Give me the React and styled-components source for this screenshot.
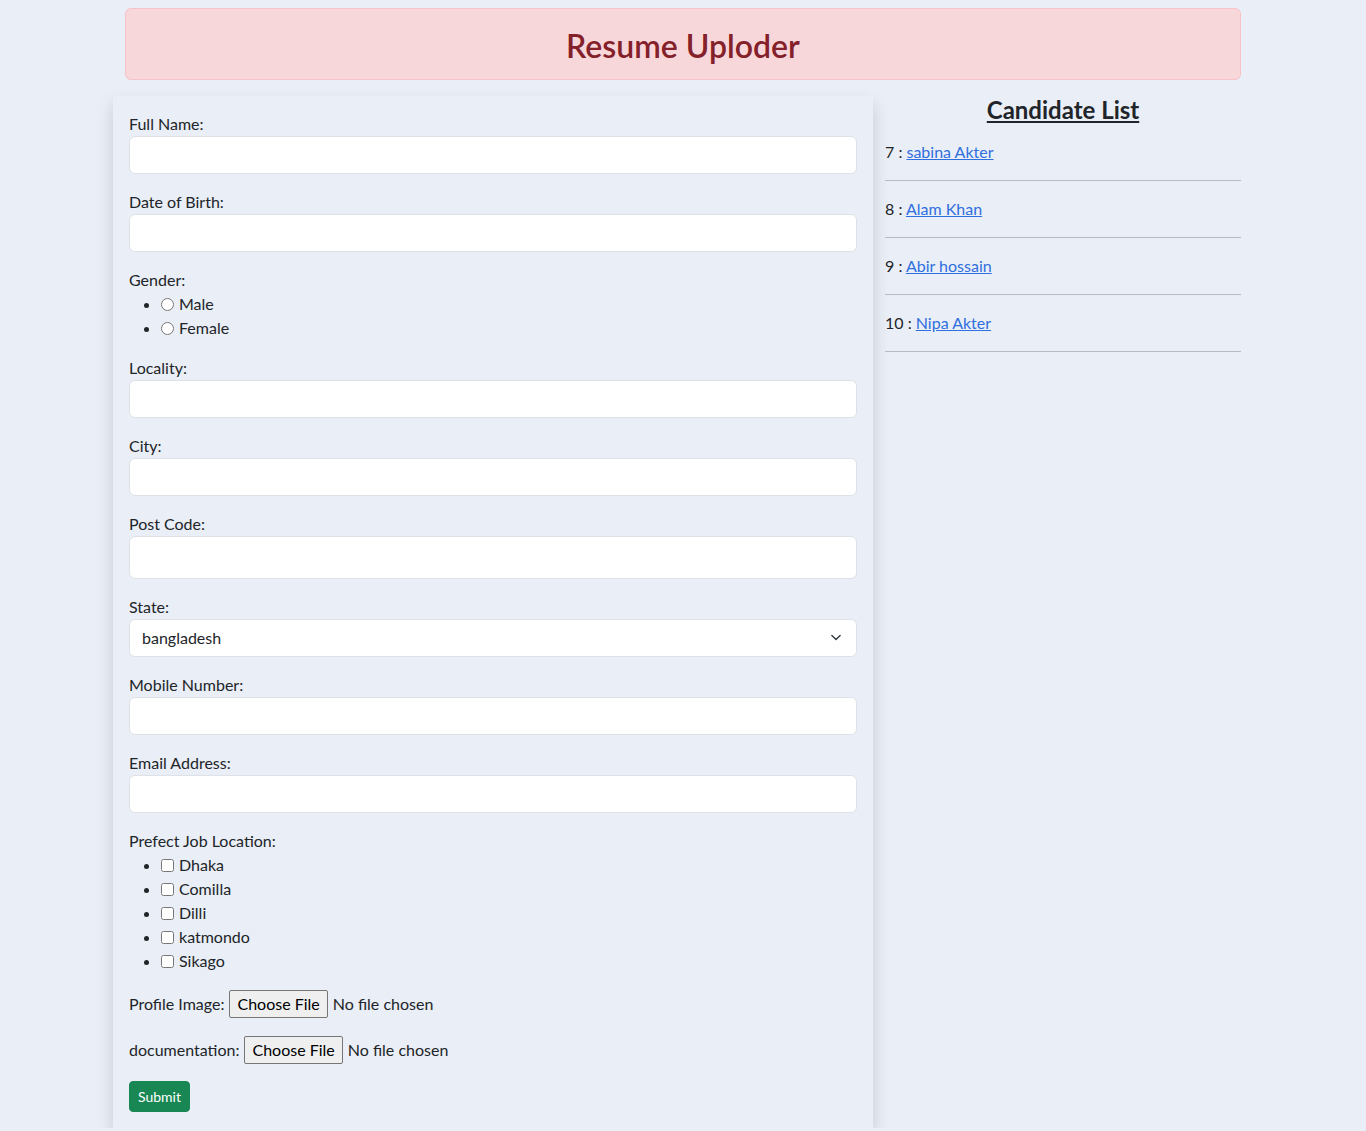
import React from 'react';
import styled, { createGlobalStyle } from 'styled-components';

const FONT = `"Segoe UI", Lato, "Liberation Sans", sans-serif`;

const GlobalStyle = createGlobalStyle`
  * { box-sizing: border-box; }
  body {
    margin: 0;
    background-color: #eaeef6;
    color: #212529;
    font-family: ${FONT};
    font-size: 16px;
    line-height: 1.5;
  }
`;

const Container = styled.div`
  max-width: 1140px;
  margin: 0 auto;
  padding: 0 12px;
`;

const Alert = styled.div`
  margin-top: 8px;
  margin-bottom: 16px;
  padding: 18px 16px 14px;
  background-color: #f8d7da;
  border: 1px solid #f5c2c7;
  border-radius: 6px;
  color: #842029;
  text-align: center;
`;

const Title = styled.h2`
  margin: 0;
  font-size: 32px;
  font-weight: 600;
  line-height: 1.2;
`;

const Row = styled.div`
  display: flex;
  margin: 0 -12px;
  align-items: flex-start;
`;

const FormCol = styled.form`
  width: 760px;
  flex: 0 0 auto;
  padding: 16px;
  box-shadow: 0 8px 16px rgba(0, 0, 0, 0.15);
`;

const ListCol = styled.div`
  flex: 1;
  padding: 0 12px;
`;

const Group = styled.div`
  margin-bottom: 16px;
`;

const Label = styled.label`
  display: block;
`;

const Input = styled.input`
  display: block;
  width: 100%;
  height: ${p => p.$h || 38}px;
  padding: 6px 12px;
  font: inherit;
  color: #212529;
  background: #fff;
  border: 1px solid #dee2e6;
  border-radius: 6px;
  outline: none;
`;

const SelectWrap = styled.div`
  position: relative;
`;

const Select = styled.select`
  display: block;
  width: 100%;
  height: 38px;
  padding: 6px 36px 6px 12px;
  font: inherit;
  color: #212529;
  background: #fff;
  border: 1px solid #dee2e6;
  border-radius: 6px;
  appearance: none;
  outline: none;
`;

const Chevron = styled.svg`
  position: absolute;
  right: 14px;
  top: 13px;
  pointer-events: none;
`;

const OptionList = styled.ul`
  margin: 0 0 16px;
  padding-left: 32px;
`;

const Choice = styled.input`
  width: 13px;
  height: 13px;
  margin: 0 5px 0 0;
  vertical-align: -1px;
`;

const FileRow = styled.div`
  height: 30px;
  margin-bottom: 16px;
  display: flex;
  align-items: center;
  gap: 5px;
`;

const FileInput = styled.input`
  font: inherit;
  color: #212529;
  &::file-selector-button {
    font: inherit;
    height: 28px;
    padding: 0 7px;
    margin-right: 5px;
    color: #000;
    background: #efefef;
    border: 1px solid #767676;
    border-radius: 2px;
  }
`;

const SubmitButton = styled.button`
  height: 31px;
  padding: 0 8px;
  font-family: ${FONT};
  font-size: 14px;
  color: #fff;
  background-color: #198754;
  border: 1px solid #198754;
  border-radius: 4px;
`;

const ListTitle = styled.h4`
  margin: 0 0 15px;
  font-size: 24px;
  font-weight: 700;
  line-height: 1.2;
  text-align: center;
  text-decoration: underline;
`;

const Candidate = styled.div`
  line-height: 24px;
`;

const CandidateLink = styled.a`
  color: #2f6fe0;
  text-decoration: underline;
`;

const Rule = styled.hr`
  margin: 16px 0;
  border: 0;
  border-top: 1px solid #212529;
  opacity: 0.25;
`;

const textFields = [
  { label: 'Full Name:' },
  { label: 'Date of Birth:' },
];
const addressFields = [
  { label: 'Locality:' },
  { label: 'City:' },
  { label: 'Post Code:', h: 43 },
];
const contactFields = [
  { label: 'Mobile Number:' },
  { label: 'Email Address:' },
];
const locations = ['Dhaka', 'Comilla', 'Dilli', 'katmondo', 'Sikago'];
const candidates = [
  { id: 7, name: 'sabina Akter' },
  { id: 8, name: 'Alam Khan' },
  { id: 9, name: 'Abir hossain' },
  { id: 10, name: 'Nipa Akter' },
];

const TextField = ({ label, h }) => (
  <Group>
    <Label>{label}</Label>
    <Input type="text" $h={h} />
  </Group>
);

const App = () => {
  return (
    <>
      <GlobalStyle />
      <Container>
        <Alert>
          <Title>Resume Uploder</Title>
        </Alert>
        <Row>
          <FormCol onSubmit={e => e.preventDefault()}>
            {textFields.map(f => <TextField key={f.label} {...f} />)}

            <Label>Gender:</Label>
            <OptionList>
              <li><Choice type="radio" name="gender" />Male</li>
              <li><Choice type="radio" name="gender" />Female</li>
            </OptionList>

            {addressFields.map(f => <TextField key={f.label} {...f} />)}

            <Group>
              <Label>State:</Label>
              <SelectWrap>
                <Select defaultValue="bangladesh">
                  <option value="bangladesh">bangladesh</option>
                  <option value="india">india</option>
                  <option value="nepal">nepal</option>
                </Select>
                <Chevron width="14" height="11" viewBox="0 0 16 16">
                  <path d="m2 5 6 6 6-6" fill="none" stroke="#343a40" strokeWidth="2" strokeLinecap="round" strokeLinejoin="round" />
                </Chevron>
              </SelectWrap>
            </Group>

            {contactFields.map(f => <TextField key={f.label} {...f} />)}

            <Label>Prefect Job Location:</Label>
            <OptionList>
              {locations.map(l => (
                <li key={l}><Choice type="checkbox" />{l}</li>
              ))}
            </OptionList>

            <FileRow>
              <span>Profile Image:</span>
              <FileInput type="file" />
            </FileRow>
            <FileRow>
              <span>documentation:</span>
              <FileInput type="file" />
            </FileRow>

            <SubmitButton type="submit">Submit</SubmitButton>
          </FormCol>

          <ListCol>
            <ListTitle>Candidate List</ListTitle>
            {candidates.map(c => (
              <React.Fragment key={c.id}>
                <Candidate>
                  {c.id} : <CandidateLink href="#">{c.name}</CandidateLink>
                </Candidate>
                <Rule />
              </React.Fragment>
            ))}
          </ListCol>
        </Row>
      </Container>
    </>
  );
};

export default App;
